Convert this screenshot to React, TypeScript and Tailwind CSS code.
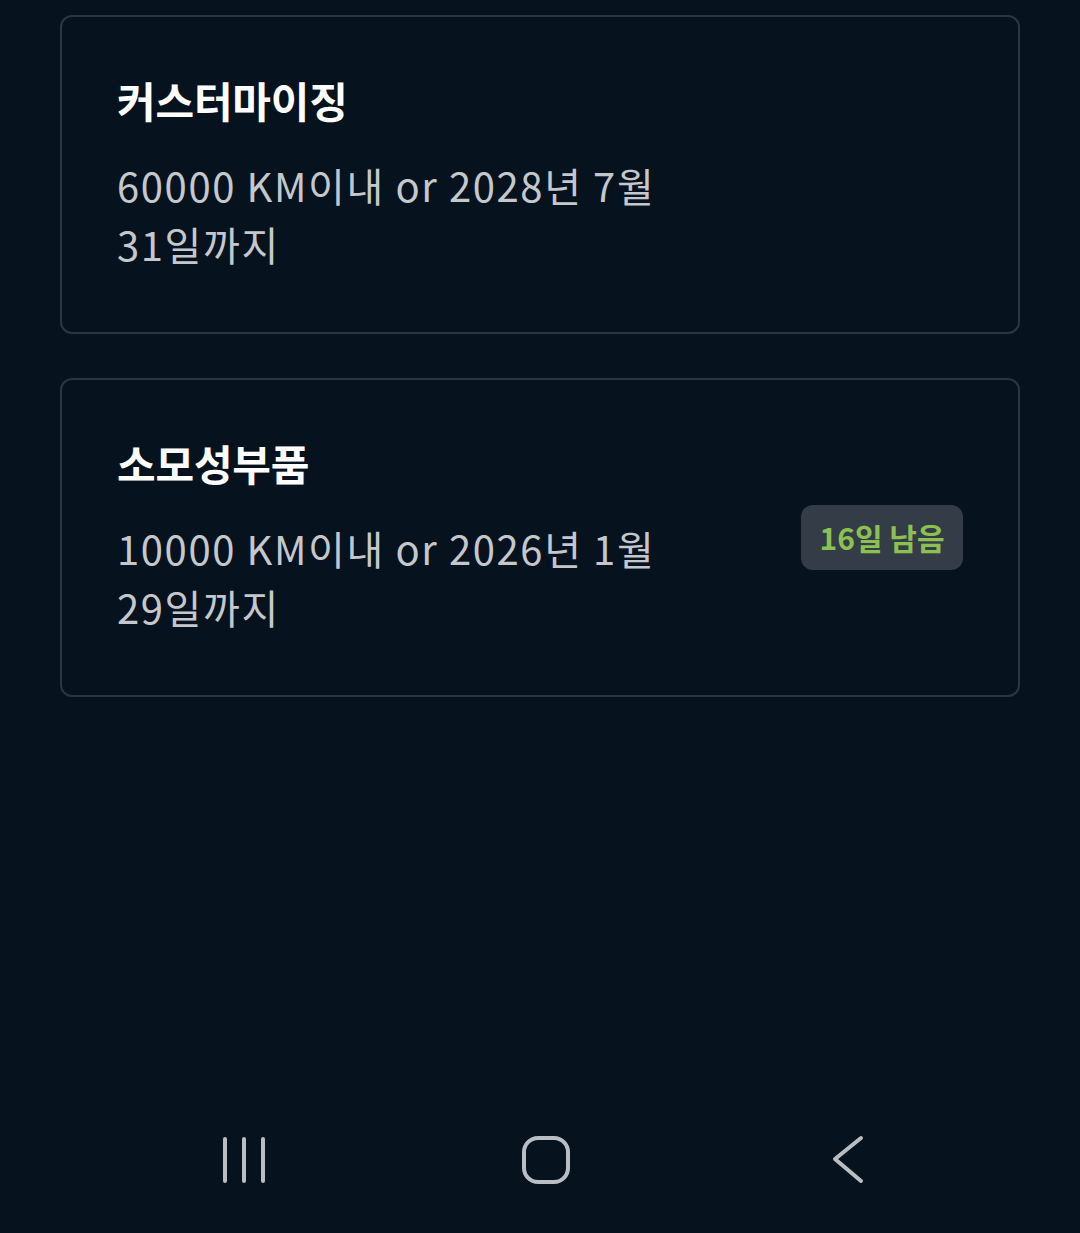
export default function App() {
  return (
    <main
      className="w-[1080px] h-[1233px] bg-[#06131e] flex flex-col"
      style={{ fontFamily: '"Noto Sans CJK KR", "Noto Sans", sans-serif' }}
    >
      <div className="flex-1 px-[60px] pt-[15px] flex flex-col gap-[44px]">
        <WarrantyCard title="커스터마이징" line1="60000 KM이내 or 2028년 7월" line2="31일까지" />
        <WarrantyCard
          title="소모성부품"
          line1="10000 KM이내 or 2026년 1월"
          line2="29일까지"
          badge="16일 남음"
        />
      </div>

      <nav className="h-[146px] flex items-center pl-[93px]">
        <div className="w-[302px] flex justify-center">
          <svg width="48" height="48" viewBox="0 0 48 48" fill="none" stroke="#b9bec3" strokeWidth="4" strokeLinecap="round">
            <path d="M5 3v42M24 3v42M43 3v42" />
          </svg>
        </div>
        <div className="w-[302px] flex justify-center">
          <svg width="50" height="50" viewBox="0 0 50 50" fill="none" stroke="#b9bec3" strokeWidth="4">
            <rect x="3" y="3" width="44" height="44" rx="14" />
          </svg>
        </div>
        <div className="w-[302px] flex justify-center">
          <svg width="34" height="50" viewBox="0 0 34 50" fill="none" stroke="#b9bec3" strokeWidth="4" strokeLinecap="round" strokeLinejoin="round">
            <path d="M30 3L4 24l26 22" />
          </svg>
        </div>
      </nav>
    </main>
  );
}

function WarrantyCard({
  title,
  line1,
  line2,
  badge,
}: {
  title: string;
  line1: string;
  line2: string;
  badge?: string;
}) {
  return (
    <div className="border-2 border-[#2b3640] rounded-[12px] px-[55px] pt-[57px] pb-[58px] flex items-center justify-between">
      <div>
        <h2 className="text-[42px] leading-[52px] font-bold text-white tracking-[-0.2px]">{title}</h2>
        <p className="mt-[30px] text-[40px] leading-[59px] text-[#c4c8cd] tracking-[1.6px]">
          {line1}
          <br />
          {line2}
        </p>
      </div>
      {badge && (
        <span className="bg-[#333c47] rounded-[12px] w-[162px] h-[65px] flex items-center justify-center text-[30px] font-bold text-[#8cc152]">
          {badge}
        </span>
      )}
    </div>
  );
}
